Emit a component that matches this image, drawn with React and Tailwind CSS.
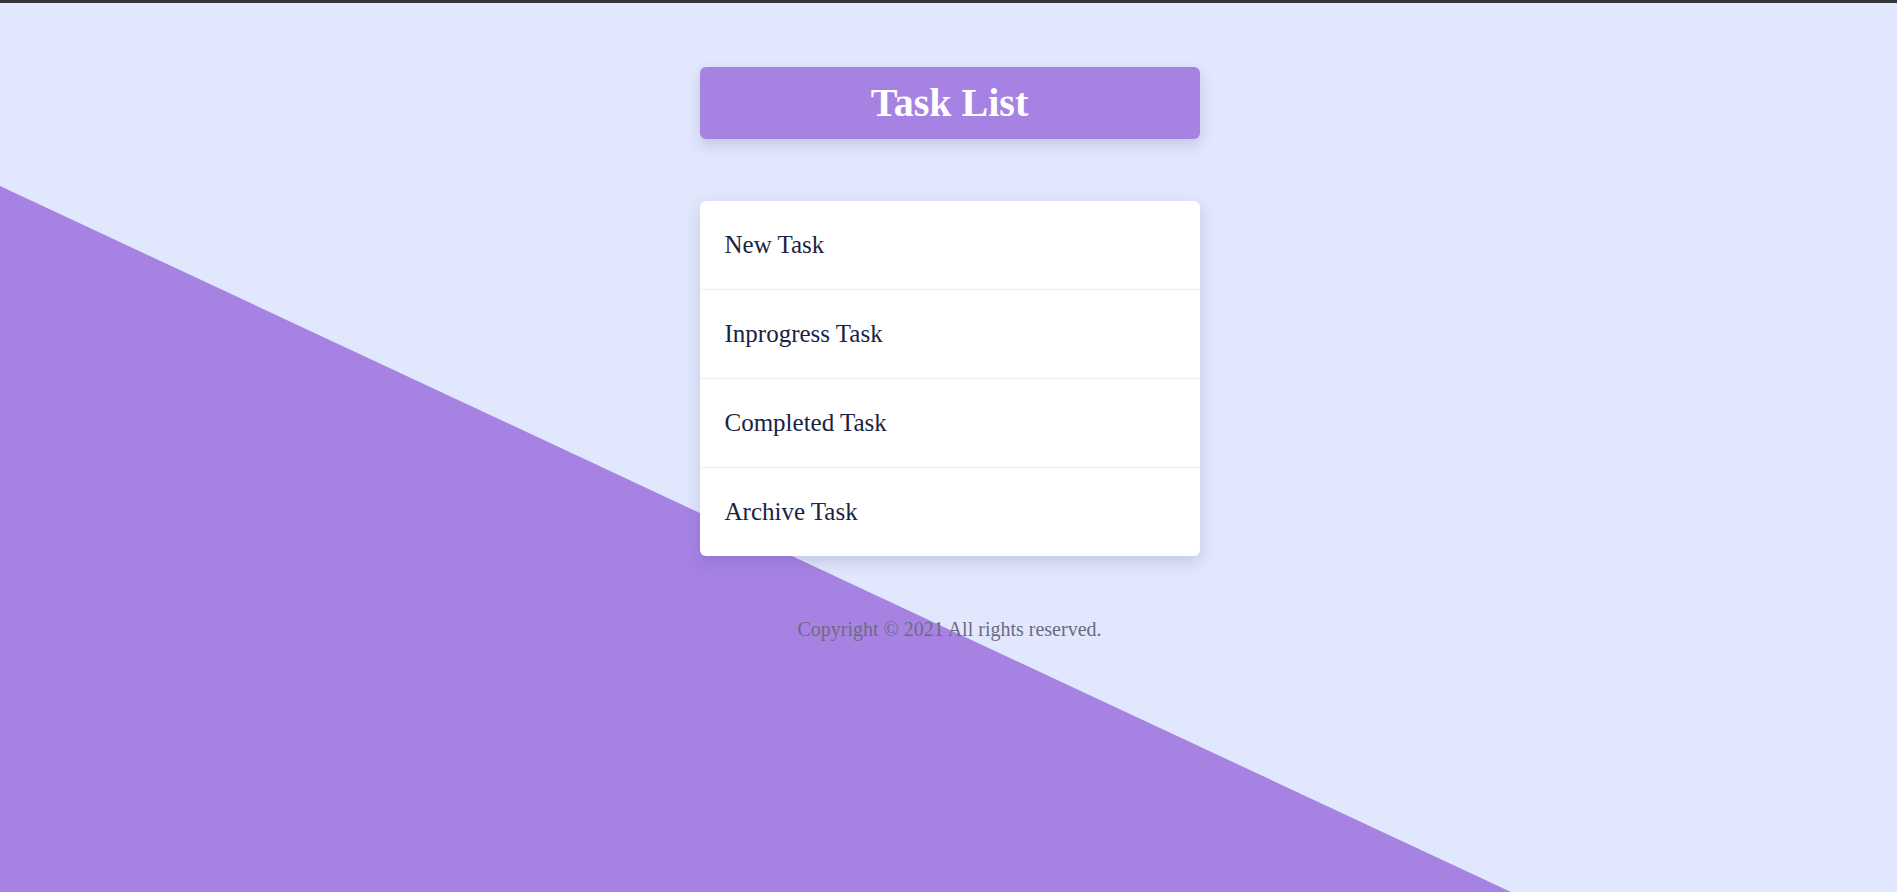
import React from "react";

const tasks = ["New Task", "Inprogress Task", "Completed Task", "Archive Task"];

export default function App() {
  return (
    <div className="relative min-h-screen overflow-hidden bg-[#e1e7fc] font-['Liberation_Serif',serif]">
      {/* diagonal purple backdrop */}
      <div className="absolute inset-0 bg-[#a683e3] [clip-path:polygon(0_186px,1511px_892px,0_892px)]"></div>
      <div className="relative h-[3px] bg-[#35363a]"></div>

      <div className="relative flex flex-col items-center pt-[64px] pl-[2px]">
        <div className="w-[500px] h-[72px] flex items-center justify-center bg-[#a683e3] rounded-md shadow-[0_6px_14px_rgba(60,60,120,0.18)]">
          <h1 className="text-[40px] font-bold text-white leading-none">Task List</h1>
        </div>

        <ul className="mt-[62px] w-[500px] bg-white rounded-md shadow-[0_6px_16px_rgba(60,60,120,0.18)]">
          {tasks.map((task, idx) => (
            <li
              key={idx}
              className={`flex items-center px-[25px] text-[25px] text-[#1a2341] ${
                idx < tasks.length - 1 ? "h-[89px] border-b border-[#eceef3]" : "h-[88px]"
              }`}
            >
              {task}
            </li>
          ))}
        </ul>

        <p className="mt-[58px] text-[20px] text-[#6e6a80]">
          Copyright © 2021 All rights reserved.
        </p>
      </div>
    </div>
  );
}
